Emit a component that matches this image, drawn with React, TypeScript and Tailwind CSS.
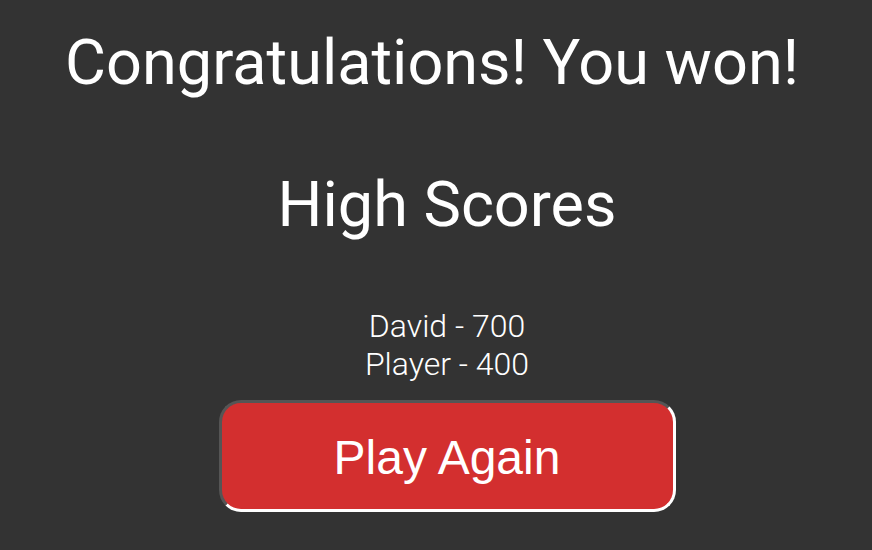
export default function App() {
  return (
    <div className="w-[872px] h-[550px] bg-[#333333] text-white flex flex-col items-center overflow-hidden pl-[22px]" style={{ fontFamily: "Roboto, 'Liberation Sans', sans-serif" }}>
      <h1 className="mt-[25px] mr-[30px] text-[63px] leading-[75px] font-normal whitespace-nowrap">Congratulations! You won!</h1>
      <h2 className="mt-[67px] text-[63px] leading-[75px] font-normal">High Scores</h2>
      <div className="mt-[65px] flex flex-col items-center text-[32px] leading-[38px] font-light">
        <div>David - 700</div>
        <div>Player - 400</div>
      </div>
      <button
        className="mt-[17px] w-[457px] h-[112px] pt-[4px] bg-[#d32f2f] rounded-[22px] border-[3px] border-t-[#555555] border-l-[#555555] border-b-white border-r-white text-white text-[48px]"
        style={{ fontFamily: "'Liberation Sans', Arial, sans-serif" }}
      >
        Play Again
      </button>
    </div>
  );
}
